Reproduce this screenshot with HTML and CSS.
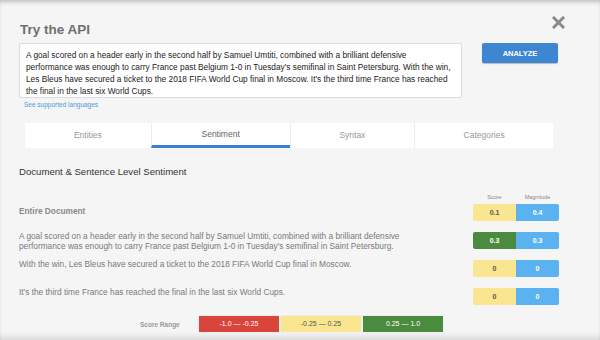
FILE: index.html
```html
<!DOCTYPE html>
<html lang="en">
  <head>
    <meta charset="UTF-8" />
    <title>Try the API</title>
    <link rel="stylesheet" href="styles.css">
  </head>
  <body>
    <div class="page">
      <!-- 헤더 -->
      <div class="head">
        <h2>Try the API</h2>
        <svg class="close" width="13" height="13" viewBox="0 0 13 13">
          <path d="M2 2 L11 11 M11 2 L2 11" stroke="#8a8a8a" stroke-width="3" stroke-linecap="square"/>
        </svg>
      </div>

      <!-- 입력 -->
      <div class="input-row">
        <div class="input-col">
          <div class="textbox">A goal scored on a header early in the second half by Samuel Umtiti, combined with a brilliant defensive performance was enough to carry France past Belgium 1-0 in Tuesday's semifinal in Saint Petersburg. With the win, Les Bleus have secured a ticket to the 2018 FIFA World Cup final in Moscow. It's the third time France has reached the final in the last six World Cups.</div>
          <a class="langs" href="#">See supported languages</a>
        </div>
        <button class="analyze">ANALYZE</button>
      </div>

      <!-- 탭 -->
      <ul class="tabs">
        <li>Entities</li>
        <li class="on">Sentiment</li>
        <li>Syntax</li>
        <li>Categories</li>
      </ul>

      <h3>Document &amp; Sentence Level Sentiment</h3>

      <!-- 결과표 -->
      <div class="results">
        <div class="row labels">
          <span class="txt"></span>
          <span class="lbl">Score</span>
          <span class="lbl">Magnitude</span>
        </div>
        <div class="row doc">
          <span class="txt">Entire Document</span>
          <span class="box yellow">0.1</span>
          <span class="box blue">0.4</span>
        </div>
        <div class="row">
          <span class="txt">A goal scored on a header early in the second half by Samuel Umtiti, combined with a brilliant defensive performance was enough to carry France past Belgium 1-0 in Tuesday's semifinal in Saint Petersburg.</span>
          <span class="box green">0.3</span>
          <span class="box blue">0.3</span>
        </div>
        <div class="row">
          <span class="txt">With the win, Les Bleus have secured a ticket to the 2018 FIFA World Cup final in Moscow.</span>
          <span class="box yellow">0</span>
          <span class="box blue">0</span>
        </div>
        <div class="row">
          <span class="txt">It's the third time France has reached the final in the last six World Cups.</span>
          <span class="box yellow">0</span>
          <span class="box blue">0</span>
        </div>
      </div>

      <!-- 점수 범위 -->
      <div class="range">
        <span class="range-lbl">Score Range</span>
        <span class="rbox red">-1.0 &mdash; -0.25</span>
        <span class="rbox yellow">-0.25 &mdash; 0.25</span>
        <span class="rbox green">0.25 &mdash; 1.0</span>
      </div>
    </div>
  </body>
</html>
```

FILE: styles.css
```css
/* 초기화 */
html,
body,
ul,
h2,
h3 {
  margin: 0;
  padding: 0;
}
ul {
  list-style: none;
}

body {
  background-color: #f5f5f5;
  font-family: "Liberation Sans", Arial, sans-serif;
}

/* 전체 박스 */
.page {
  height: 340px;
  box-sizing: border-box;
  padding: 16px 41px 0 19px;
  box-shadow: inset 0 4px 4px -2px rgba(0, 0, 0, 0.22),
    inset 0 -7px 6px -4px rgba(0, 0, 0, 0.12);
  overflow: hidden;
}

/* 헤더 */
.head {
  display: flex;
  justify-content: space-between;
  align-items: flex-start;
  height: 27px;
}
.head h2 {
  margin: 6px 0 0 1px;
  font-size: 13.5px;
  font-weight: bold;
  color: #707070;
}
.close {
  margin-right: -6px;
}

/* 입력줄 */
.input-row {
  display: flex;
  align-items: flex-start;
  gap: 20px;
}
.textbox {
  width: 443px;
  height: 55px;
  box-sizing: border-box;
  padding: 5px 6px;
  background-color: #fff;
  border: 1px solid #dcdcdc;
  border-radius: 2px;
  font-size: 8.3px;
  line-height: 12px;
  color: #222;
}
.langs {
  display: block;
  margin: 3px 0 0 5px;
  font-size: 6.5px;
  color: #4a9ae0;
  text-decoration: none;
}
.analyze {
  width: 76px;
  height: 20px;
  padding: 0;
  border: none;
  border-radius: 2px;
  background-color: #3d86d2;
  box-shadow: 0 1px 1px rgba(0, 0, 0, 0.25);
  color: #fff;
  font-family: inherit;
  font-size: 7.5px;
  font-weight: bold;
}

/* 탭 */
.tabs {
  display: flex;
  width: 528px;
  margin: 15px 0 0 6px;
  background-color: #fff;
}
.tabs li {
  flex: 126 0 0;
  height: 25px;
  line-height: 25px;
  box-sizing: border-box;
  text-align: center;
  font-size: 8.5px;
  color: #999;
}
.tabs li + li {
  border-left: 1px solid #ececec;
}
.tabs li:nth-child(2) {
  flex-grow: 138;
}
.tabs li:nth-child(3) {
  flex-grow: 124;
}
.tabs li:nth-child(4) {
  flex-grow: 138;
}
.tabs li.on {
  color: #666;
  border-bottom: 3px solid #3b7fd3;
  line-height: 23px;
}

/* 소제목 */
h3 {
  margin-top: 18px;
  font-size: 9.6px;
  font-weight: normal;
  color: #333;
}

/* 결과표 */
.results {
  margin-top: 17px;
}
.row {
  display: grid;
  grid-template-columns: 1fr 43px 43px;
  align-items: start;
  height: 28px;
}
.row .txt {
  padding: 0 60px 0 0;
  font-size: 8.3px;
  line-height: 9.5px;
  color: #7a7a7a;
}
.row.labels {
  height: 10px;
}
.row.doc .txt {
  font-weight: bold;
  color: #8a8a8a;
  padding-top: 3px;
}
.lbl {
  text-align: center;
  font-size: 5.5px;
  color: #888;
}
.box {
  height: 17px;
  line-height: 17px;
  text-align: center;
  font-size: 7px;
  font-weight: bold;
}
.box:nth-child(2) {
  border-radius: 2px 0 0 2px;
}
.box:nth-child(3) {
  border-radius: 0 2px 2px 0;
}

/* 색상 */
.yellow {
  background-color: #fae590;
  color: #555;
}
.blue {
  background-color: #5ab3f0;
  color: #fff;
}
.green {
  background-color: #4b8b3f;
  color: #fff;
}
.red {
  background-color: #d9443b;
  color: #fff;
}

/* 점수 범위 */
.range {
  display: flex;
  align-items: center;
  margin: -1px 0 0 121px;
}
.range-lbl {
  width: 58px;
  font-size: 6.5px;
  font-weight: bold;
  color: #999;
}
.rbox {
  width: 80px;
  height: 16px;
  line-height: 16px;
  text-align: center;
  font-size: 7px;
  border: 1px solid #eee;
}
```
